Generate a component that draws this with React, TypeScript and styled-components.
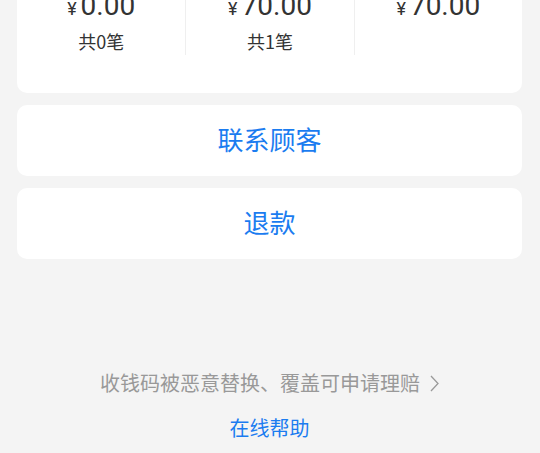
import React from "react";
import styled, { createGlobalStyle } from "styled-components";

const GlobalStyle = createGlobalStyle`
  html, body {
    margin: 0;
    padding: 0;
    background: #f4f4f4;
  }
  body {
    font-family: "Noto Sans CJK SC", "Noto Sans", sans-serif;
    overflow: hidden;
  }
`;

const Page = styled.main`
  display: flex;
  flex-direction: column;
  gap: 12px;
  padding: 0 18px 0 17px;
  height: 453px;
  box-sizing: border-box;
`;

const SummaryCard = styled.section`
  background: #fff;
  border-radius: 10px;
  margin-top: -32px;
  padding: 20px 0 38px;
  display: grid;
  grid-template-columns: repeat(3, 1fr);
`;

const Column = styled.div<{ $divider?: boolean }>`
  display: flex;
  flex-direction: column;
  align-items: center;
  gap: 4px;
  border-left: ${(p) => (p.$divider ? "1px solid #efefef" : "none")};
`;

const Amount = styled.div`
  font-family: Roboto, "Noto Sans", sans-serif;
  font-size: 28px;
  line-height: 36px;
  color: #333;
  display: flex;
  align-items: baseline;
  gap: 4px;
`;

const Currency = styled.span`
  font-size: 18px;
`;

const Count = styled.div<{ $hidden?: boolean }>`
  font-size: 18px;
  line-height: 20px;
  height: 20px;
  padding-bottom: 4px;
  color: #333;
  visibility: ${(p) => (p.$hidden ? "hidden" : "visible")};
`;

const ActionButton = styled.button`
  height: 71px;
  border: none;
  border-radius: 10px;
  background: #fff;
  color: #1b7cf0;
  font-family: "Noto Sans CJK SC", sans-serif;
  font-size: 26px;
  padding: 0 0 4px;
  cursor: pointer;
  flex-shrink: 0;
`;

const Footer = styled.footer`
  display: flex;
  flex-direction: column;
  align-items: center;
  gap: 17px;
  margin-top: 98px;
`;

const Claim = styled.a`
  display: flex;
  align-items: center;
  gap: 10px;
  font-size: 20px;
  line-height: 28px;
  color: #999;
  text-decoration: none;
`;

const Help = styled.a`
  font-size: 20px;
  line-height: 28px;
  color: #1b7cf0;
  text-decoration: none;
`;

const Chevron = () => (
  <svg width="9" height="17" viewBox="0 0 9 17" fill="none">
    <path d="M1 1l7 7.5L1 16" stroke="#9a9a9a" strokeWidth="1.3" />
  </svg>
);

const stats = [
  { amount: "0.00", count: "共0笔" },
  { amount: "70.00", count: "共1笔" },
  { amount: "70.00", count: "" },
];

export default function App() {
  return (
    <>
      <GlobalStyle />
      <Page>
        <SummaryCard>
          {stats.map((s, i) => (
            <Column key={i} $divider={i > 0}>
              <Amount>
                <Currency>¥</Currency>
                {s.amount}
              </Amount>
              <Count $hidden={!s.count}>{s.count || "-"}</Count>
            </Column>
          ))}
        </SummaryCard>
        <ActionButton>联系顾客</ActionButton>
        <ActionButton>退款</ActionButton>
        <Footer>
          <Claim href="#">
            收钱码被恶意替换、覆盖可申请理赔
            <Chevron />
          </Claim>
          <Help href="#">在线帮助</Help>
        </Footer>
      </Page>
    </>
  );
}
